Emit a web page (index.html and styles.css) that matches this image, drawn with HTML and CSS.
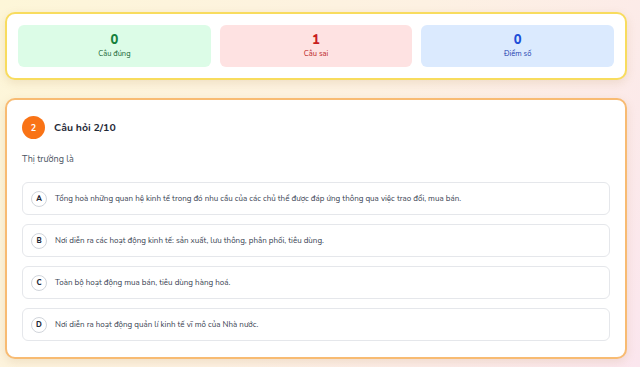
FILE: index.html
```html
<!DOCTYPE html>
<html lang="vi">
<head>
<meta charset="utf-8">
<title>Quiz</title>
<link rel="stylesheet" href="styles.css">
</head>
<body>
<div class="page">
  <section class="card stats">
    <div class="stat stat-green"><div class="num">0</div><div class="lbl">Câu đúng</div></div>
    <div class="stat stat-red"><div class="num">1</div><div class="lbl">Câu sai</div></div>
    <div class="stat stat-blue"><div class="num">0</div><div class="lbl">Điểm số</div></div>
  </section>
  <section class="card quiz">
    <div class="head">
      <span class="badge">2</span>
      <span class="title">Câu hỏi 2/10</span>
    </div>
    <p class="question">Thị trường là</p>
    <div class="options">
      <div class="opt"><span class="letter">A</span><span class="text">Tổng hoà những quan hệ kinh tế trong đó nhu cầu của các chủ thể được đáp ứng thông qua việc trao đổi, mua bán.</span></div>
      <div class="opt"><span class="letter">B</span><span class="text">Nơi diễn ra các hoạt động kinh tế: sản xuất, lưu thông, phân phối, tiêu dùng.</span></div>
      <div class="opt"><span class="letter">C</span><span class="text">Toàn bộ hoạt động mua bán, tiêu dùng hàng hoá.</span></div>
      <div class="opt"><span class="letter">D</span><span class="text">Nơi diễn ra hoạt động quản lí kinh tế vĩ mô của Nhà nước.</span></div>
    </div>
  </section>
</div>
</body>
</html>
```
FILE: styles.css
```css
* { box-sizing: border-box; }
html, body { margin: 0; height: 100%; }
body {
  font-family: "Nunito", "Lato", "Open Sans", sans-serif;
  background: linear-gradient(120deg, #fdf6d8 0%, #fdf1e2 50%, #fbe6ee 100%);
  color: #374151;
  overflow: hidden;
}
.page {
  padding: 12px 13px 0 5px;
  display: flex;
  flex-direction: column;
  gap: 18px;
}
.card {
  background: #fff;
  border-radius: 10px;
  box-shadow: 0 3px 10px rgba(180, 140, 80, 0.18);
}
.stats {
  border: 2px solid #f8dc5e;
  padding: 11px;
  display: grid;
  grid-template-columns: 1fr 1fr 1fr;
  gap: 9px;
}
.stat {
  height: 42px;
  border-radius: 6px;
  display: flex;
  flex-direction: column;
  align-items: center;
  justify-content: center;
}
.num { font-size: 13px; font-weight: 800; line-height: 15px; }
.lbl { font-size: 7.5px; line-height: 10px; margin-top: 1px; }
.stat-green { background: #dcfce7; }
.stat-green .num { color: #15803d; }
.stat-green .lbl { color: #166534; }
.stat-red { background: #fee2e2; }
.stat-red .num { color: #c81e1e; }
.stat-red .lbl { color: #b91c1c; }
.stat-blue { background: #dbeafe; }
.stat-blue .num { color: #1d4ed8; }
.stat-blue .lbl { color: #1e40af; }

.quiz {
  border: 2px solid #f8bb72;
  padding: 16px 15px 16px 15px;
}
.head { display: flex; align-items: center; gap: 9px; height: 23px; }
.badge {
  width: 23px; height: 23px; border-radius: 50%;
  background: #f97316; color: #fff;
  font-size: 9px; font-weight: 700;
  display: flex; align-items: center; justify-content: center;
}
.title { font-size: 10.5px; font-weight: 700; color: #1f2937; }
.question {
  margin: 13px 0 16px 0;
  font-size: 9px;
  line-height: 14px;
  color: #4b5563;
}
.options { display: flex; flex-direction: column; gap: 9px; }
.opt {
  height: 33px;
  border: 1px solid #e5e7eb;
  border-radius: 6px;
  display: flex;
  align-items: center;
  padding-left: 8px;
  gap: 8px;
}
.letter {
  width: 16px; height: 16px; border-radius: 50%;
  border: 1px solid #d1d5db;
  display: flex; align-items: center; justify-content: center;
  font-size: 7.5px; font-weight: 800; color: #1f2937;
  flex: none;
}
.text { font-size: 8px; color: #374151; }
```
